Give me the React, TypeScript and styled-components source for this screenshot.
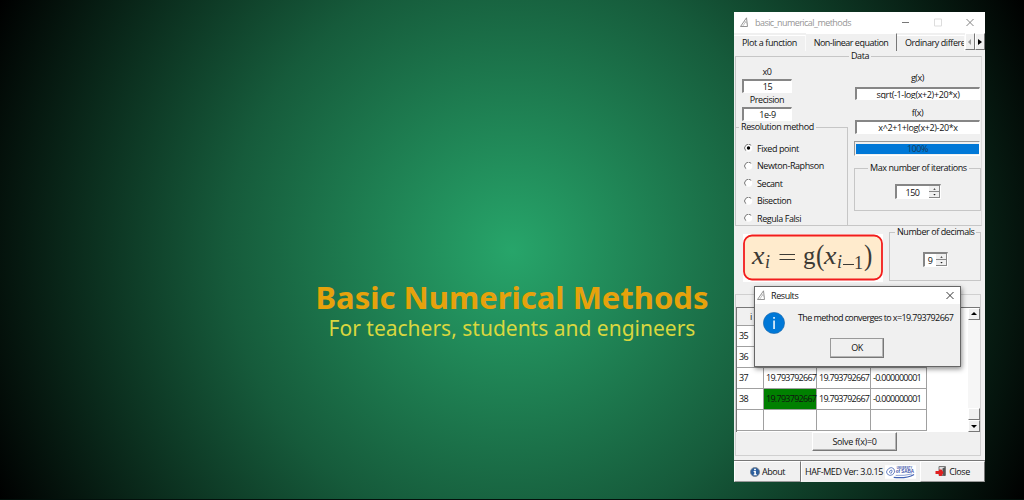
import React from 'react';
import styled, { createGlobalStyle, css } from 'styled-components';

const Global = createGlobalStyle`
  * { box-sizing: border-box; }
  body { margin: 0; background: #000; overflow: hidden; }
`;

const Page = styled.main`
  width: 1024px;
  height: 500px;
  display: flex;
  justify-content: flex-end;
  align-items: flex-start;
  padding: 12px 39px 0 0;
  border-bottom: 1px solid #02100b;
  background: radial-gradient(circle 570px at 512px 250px, #27a56a 0%, #165b3b 50%, #000 100%);
`;

const Hero = styled.header`
  width: 440px;
  padding-top: 264px;
  margin-right: 2px;
  text-align: center;
  font-family: 'Noto Sans', sans-serif;
  white-space: nowrap;
`;
const HeroTitle = styled.h1`
  margin: 0;
  font-size: 31px;
  line-height: 42px;
  font-weight: 700;
  color: #e6a20c;
`;
const HeroSub = styled.p`
  margin: -2px 0 0;
  font-size: 21px;
  line-height: 24px;
  color: #d9d73f;
`;

const Window = styled.section`
  position: relative;
  width: 251px;
  height: 470px;
  display: flex;
  flex-direction: column;
  background: #f0f0f0;
  color: #111;
  font: 9px/12px 'Open Sans', sans-serif;
  letter-spacing: -0.42px;
  white-space: nowrap;
  overflow: hidden;
`;

const Text = styled.span<{ $ls?: number; $pl?: number }>`
  padding-left: ${(p) => p.$pl ?? 0}px;
  letter-spacing: ${(p) => p.$ls ?? -0.42}px;
`;

const TitleBar = styled.div`
  flex: 0 0 21px;
  display: flex;
  align-items: center;
  gap: 6px;
  padding: 0 11px 0 6px;
  background: #fff;
  color: #969696;
  svg { flex: none; }
`;
const Grow = styled.span<{ $ls?: number }>`
  flex: 1;
  letter-spacing: ${(p) => p.$ls ?? 0}px;
`;
const TitleButtons = styled.span`
  display: flex;
  gap: 24px;
`;

const Tabs = styled.nav`
  flex: 0 0 22px;
  display: flex;
`;
const Tab = styled.div<{ $w: number; $active?: boolean }>`
  width: ${(p) => p.$w}px;
  height: ${(p) => (p.$active ? 18 : 16)}px;
  margin-top: ${(p) => (p.$active ? 0 : 2)}px;
  padding-top: ${(p) => (p.$active ? 3 : 1)}px;
  text-align: center;
  letter-spacing: ${(p) => (p.$active ? -0.5 : -0.4)}px;
  overflow: hidden;
  border-top: 1px solid #fff;
  border-right: 1px solid ${(p) => (p.$active ? '#777' : '#fafafa')};
`;
const TabArrow = styled.div<{ $w: number }>`
  width: ${(p) => p.$w}px;
  height: 17px;
  display: grid;
  place-items: center;
  border: 1px solid #fff;
  border-right-color: #777;
  border-bottom-color: #777;
`;

const Data = styled.div`
  flex: 0 0 169px;
  display: grid;
  grid-template-columns: 114px 1fr;
  position: relative;
  margin: 1px 3px 0 1px;
  border: 1px solid #c6c6c6;
  border-right-color: #dcdcdc;
`;
const Legend = styled.span<{ $left: number }>`
  position: absolute;
  top: -7px;
  left: ${(p) => p.$left}px;
  padding: 0 2px;
  background: #f0f0f0;
`;
const LeftCol = styled.div`
  display: flex;
  flex-direction: column;
  padding-top: 9px;
`;
const RightCol = styled.div`
  display: flex;
  flex-direction: column;
  padding: 15px 0 0 5px;
`;
const Caption = styled.div<{ $w: number; $h: number; $pt?: number }>`
  flex: none;
  width: ${(p) => p.$w}px;
  height: ${(p) => p.$h}px;
  padding-top: ${(p) => p.$pt ?? 0}px;
  text-align: center;
`;
const sunken = css`
  background: #fff;
  border: 1px solid #fff;
  border-top: 2px solid #868686;
  border-left: 2px solid #868686;
`;
const Field = styled.div<{ $w: number; $h: number; $ml?: number; $lh?: number; $ls?: number }>`
  ${sunken}
  flex: none;
  width: ${(p) => p.$w}px;
  height: ${(p) => p.$h}px;
  margin-left: ${(p) => p.$ml ?? 0}px;
  line-height: ${(p) => p.$lh ?? 11}px;
  letter-spacing: ${(p) => p.$ls ?? -0.42}px;
  text-align: center;
  overflow: hidden;
`;
const Methods = styled.div`
  position: relative;
  flex: none;
  width: 112px;
  height: 98px;
  margin-top: 6px;
  padding: 12px 0 0 8px;
  border-top: 1px solid #c6c6c6;
  border-right: 1px solid #c6c6c6;
`;
const Option = styled.div`
  height: 17.5px;
  display: flex;
  align-items: center;
  gap: 4px;
`;
const Progress = styled.div`
  flex: none;
  width: 126px;
  height: 15px;
  margin: 7px 0 0 -1px;
  border: 1px solid #fff;
  border-top-color: #999;
  border-left-color: #999;
  padding: 2px 0 2px 1px;
  div {
    height: 10px;
    line-height: 10px;
    text-align: center;
    background: #0078d7;
    color: #173c5e;
  }
`;
const Group = styled.div<{ $w: number; $h: number; $pt: number; $mt?: number; $ml?: number }>`
  flex: none;
  position: relative;
  width: ${(p) => p.$w}px;
  height: ${(p) => p.$h}px;
  margin-top: ${(p) => p.$mt ?? 0}px;
  margin-left: ${(p) => p.$ml ?? 0}px;
  padding-top: ${(p) => p.$pt}px;
  border: 1px solid #c6c6c6;
  display: flex;
  justify-content: center;
  align-items: flex-start;
`;
const Spin = styled.div<{ $w: number }>`
  ${sunken}
  width: ${(p) => p.$w}px;
  height: 15px;
  display: flex;
  line-height: 13px;
  span { flex: 1; text-align: center; }
`;

const FormulaRow = styled.div`
  flex: 0 0 56px;
  display: flex;
  justify-content: space-between;
  padding: 6px 4px 0 9px;
`;
const Formula = styled.div`
  width: 140px;
  height: 48px;
  margin-top: 2px;
  background: #fff;
`;

const Results = styled.div`
  position: relative;
  margin: 12px 4px 0 1px;
  height: 162px;
  padding-top: 12px;
  border: 1px solid #d0d0d0;
`;
const TableArea = styled.div`
  display: flex;
  height: 125px;
  background: #fff;
  border-left: 1px solid #777;
  border-top: 1px solid #777;
`;
const Table = styled.div`
  flex: 1;
`;
const Row = styled.div<{ $h: number; $head?: boolean }>`
  display: grid;
  grid-template-columns: 27px 53px 54px 56px;
  width: 190px;
  height: ${(p) => p.$h}px;
  background: ${(p) => (p.$head ? '#f0f0f0' : '#fff')};
`;
const Cell = styled.div<{ $hit?: boolean }>`
  display: flex;
  align-items: center;
  padding-left: 2px;
  letter-spacing: -0.73px;
  border-right: 1px solid #a0a0a0;
  border-bottom: 1px solid #a0a0a0;
  background: ${(p) => (p.$hit ? '#008000' : 'transparent')};
`;
const Scroll = styled.div`
  width: 12px;
  display: flex;
  flex-direction: column;
  background: #f6f6f6;
`;
const ScrollPart = styled.div<{ $push?: boolean }>`
  height: 12px;
  margin-top: ${(p) => (p.$push ? 'auto' : 0)};
  display: grid;
  place-items: center;
  background: #f0f0f0;
  border: 1px solid #fff;
  border-right-color: #777;
  border-bottom-color: #777;
`;
const Button = styled.div<{ $w: number; $h: number; $ml: number; $ring?: boolean }>`
  width: ${(p) => p.$w}px;
  height: ${(p) => p.$h}px;
  margin-left: ${(p) => p.$ml}px;
  display: grid;
  place-items: center;
  background: #f0f0f0;
  border: 1px solid ${(p) => (p.$ring ? '#999' : '#fff')};
  border-right-color: #777;
  border-bottom-color: #777;
  box-shadow: inset -1px -1px #b5b5b5;
`;
const Footer = styled.div`
  margin-top: auto;
  height: 22px;
  display: flex;
  border-top: 1px solid #777;
`;
const FootItem = styled.div<{ $w: number; $raised?: boolean; $pad?: number }>`
  width: ${(p) => p.$w}px;
  display: flex;
  align-items: center;
  justify-content: ${(p) => (p.$pad ? 'space-between' : 'center')};
  padding: 0 ${(p) => p.$pad ?? 0}px;
  gap: 2px;
  border-top: 1px solid #fff;
  border-bottom: 1px solid ${(p) => (p.$raised ? '#999' : '#f0f0f0')};
  border-right: 1px solid ${(p) => (p.$raised ? '#777' : '#f0f0f0')};
  border-left: 1px solid #fff;
`;

const Dialog = styled.div`
  position: absolute;
  left: 20px;
  top: 274px;
  width: 207px;
  height: 81px;
  display: flex;
  flex-direction: column;
  background: #f0f0f0;
  border: 1px solid #666;
  box-shadow: 1px 2px 5px rgba(0, 0, 0, 0.45);
`;
const DialogTitle = styled.div`
  flex: none;
  height: 17px;
  display: flex;
  align-items: center;
  gap: 5px;
  padding: 0 6px 0 2px;
  background: #fff;
`;
const DialogBody = styled.div`
  display: flex;
  height: 34px;
  padding: 8px 0 0 8px;
  gap: 13px;
`;

const AppIcon = () => (
  <svg width="9" height="11" viewBox="0 0 9 11" fill="none" stroke="#888" strokeWidth="0.9">
    <path d="M0.500 9.500L6.500 0.800L7.500 9.500Z" />
    <path d="M2.500 9.500L5.800 4.500M4.500 4L7 6.500" strokeWidth="0.5" />
  </svg>
);
const Cross = ({ color }: { color: string }) => (
  <svg width="8" height="9" viewBox="0 0 8 9" stroke={color} strokeWidth="0.9">
    <path d="M.5 1L7.5 8M7.5 1L.5 8" />
  </svg>
);
const Arrow = ({ d, color = '#000' }: { d: string; color?: string }) => (
  <svg width="6" height="6" viewBox="0 0 6 6" fill={color}>
    <path d={d} />
  </svg>
);
const Radio = ({ on }: { on?: boolean }) => (
  <svg width="9" height="9" viewBox="0 0 9 9">
    <circle cx="4.5" cy="4" r="3.8" fill="#fff" />
    <path d="M1.8 6.7A3.8 3.8 0 0 1 7.2 1.3" fill="none" stroke="#777" />
    {on && <circle cx="4.5" cy="4" r="1.7" fill="#000" />}
  </svg>
);
const SpinArrows = () => (
  <svg width="11" height="12" viewBox="0 0 11 12">
    <path d="M0 0H11V12H0Z" fill="#f0f0f0" />
    <path d="M0 5.5H11M0 11.5H11M10.5 0V12" stroke="#888" />
    <path d="M4.300 3.800L5.500 2.300L6.700 3.800ZM4.300 8L5.500 9.500L6.700 8Z" fill="#222" />
  </svg>
);
const InfoIcon = ({ size, rim }: { size: number; rim?: boolean }) => (
  <svg width={size} height={size} viewBox="0 0 22 22">
    <circle cx="11" cy="11" r={rim ? 10 : 10.6} fill={rim ? '#2c5f9e' : '#0078d7'} stroke={rim ? '#7d8793' : '#1c66a8'} strokeWidth={rim ? 2 : 0.6} />
    <path d={rim ? 'M9 4H13V7H9ZM8 9H13V16H15V18H8V16H9.5V11H8Z' : 'M10.3 5H11.8V6.8H10.3ZM10.3 8.5H11.8V17H10.3Z'} fill="#fff" />
  </svg>
);
const FormulaArt = () => (
  <svg width="140" height="48" viewBox="0 0 140 48">
    <rect x="1" y="1.500" width="138" height="44" rx="8" fill="#ffebcd" stroke="#f21c1c" strokeWidth="1.8" />
    <g fill="#3c3a35" fontFamily="'Liberation Serif', serif" fontSize="25">
      <text x="9" y="30" fontStyle="italic" textLength="12" lengthAdjust="spacingAndGlyphs">x</text>
      <text x="22" y="34" fontStyle="italic" fontSize="18">i</text>
      <text x="60" y="30" textLength="12" lengthAdjust="spacingAndGlyphs">g</text>
      <text x="73" y="31" fontSize="30" textLength="8" lengthAdjust="spacingAndGlyphs">(</text>
      <text x="81" y="30" fontStyle="italic" textLength="12" lengthAdjust="spacingAndGlyphs">x</text>
      <text x="94" y="34" fontStyle="italic" fontSize="18">i</text>
      <text x="111" y="35" fontSize="18">1</text>
      <text x="121" y="31" fontSize="30" textLength="8" lengthAdjust="spacingAndGlyphs">)</text>
    </g>
    <path d="M36.500 20.500H52M36.500 25.500H52M100 30.500H111" stroke="#3c3a35" />
  </svg>
);
const UniLogo = () => (
  <svg width="32" height="14" viewBox="0 0 32 14" fill="none" stroke="#4262b4">
    <path d="M0 0H32V14H0Z" fill="#fff" stroke="none" />
    <path d="M1.500 7Q3 2.500 7 2.500Q10 3 10 7Q8 11 5 10.500Q2 10 1.500 7ZM4.500 7Q5 5 7 5Q8 7 6 8.500Z" strokeWidth="0.8" />
    <path d="M9 12.500Q22 14 30 9.500" strokeWidth="1.200" />
    <path d="M11 10.500Q20 11 28 9" strokeWidth="0.600" />
    <g fill="#3a4fa8" stroke="none" fontFamily="'Liberation Sans', sans-serif" fontWeight="700" letterSpacing="0">
      <text x="12" y="3.500" fontSize="3" textLength="16" lengthAdjust="spacingAndGlyphs">UNIVERSITY</text>
      <text x="11" y="8.500" fontSize="5" textLength="19" lengthAdjust="spacingAndGlyphs">of SABA</text>
    </g>
  </svg>
);
const ExitIcon = () => (
  <svg width="12" height="11" viewBox="0 0 12 11">
    <path d="M4 .5H10.500V9.500H4Z" fill="#ddd" stroke="#777" />
    <path d="M7.500 2.500L10 1V10L7.500 9Z" fill="#555" />
    <path d="M4 3.500H6.500L8.500 6.500L6.500 10H4V8H0.500V5H4Z" fill="#e02020" />
  </svg>
);

const METHODS = ['Fixed point', 'Newton-Raphson', 'Secant', 'Bisection', 'Regula Falsi'];
const X = '19.793792667';
const E = '-0.000000001';
const ROWS = [
  ['35', '', '', ''],
  ['36', '', '', ''],
  ['37', X, X, E],
  ['38', X, X, E],
  ['', '', '', ''],
];

export default function App() {
  return (
    <>
      <Global />
      <Page>
        <Hero>
          <HeroTitle>Basic Numerical Methods</HeroTitle>
          <HeroSub>For teachers, students and engineers</HeroSub>
        </Hero>
        <Window>
          <TitleBar>
            <AppIcon />
            <Grow $ls={-0.55}>basic_numerical_methods</Grow>
            <TitleButtons>
              <svg width="8" height="9"><path d="M0 4.500H7" stroke="#777" /></svg>
              <svg width="8" height="9"><path d="M.5 1H7.500V8H.5Z" fill="none" stroke="#ddd" /></svg>
              <Cross color="#777" />
            </TitleButtons>
          </TitleBar>
          <Tabs>
            <Tab $w={72}>Plot a function</Tab>
            <Tab $w={91} $active>Non-linear equation</Tab>
            <Tab $w={68}><Text $pl={8}>Ordinary differe</Text></Tab>
            <TabArrow $w={10}><Arrow d="M4 0V6L1 3Z" color="#999" /></TabArrow>
            <TabArrow $w={10}><Arrow d="M1 0V6L5 3Z" /></TabArrow>
          </Tabs>
          <Data>
            <Legend $left={113}>Data</Legend>
            <LeftCol>
              <Caption $w={62} $h={13}>x0</Caption>
              <Field $w={50} $h={14} $ml={6}>15</Field>
              <Caption $w={62} $h={14} $pt={1}>Precision</Caption>
              <Field $w={50} $h={14} $ml={6}>1e-9</Field>
              <Methods>
                <Legend $left={3}>Resolution method</Legend>
                {METHODS.map((m, i) => (
                  <Option key={m}><Radio on={i === 0} />{m}</Option>
                ))}
              </Methods>
            </LeftCol>
            <RightCol>
              <Caption $w={125} $h={15}>g(x)</Caption>
              <Field $w={125} $h={13} $lh={11} $ls={-0.36}>sqrt(-1-log(x+2)+20*x)</Field>
              <Caption $w={125} $h={20} $pt={7}>f(x)</Caption>
              <Field $w={125} $h={14} $lh={11} $ls={-0.36}>x^2+1+log(x+2)-20*x</Field>
              <Progress><div>100%</div></Progress>
              <Group $w={127} $h={43} $pt={15} $mt={12} $ml={-1}>
                <Legend $left={13}>Max number of iterations</Legend>
                <Spin $w={46}><span>150</span><SpinArrows /></Spin>
              </Group>
            </RightCol>
          </Data>
          <FormulaRow>
            <Formula><FormulaArt /></Formula>
            <Group $w={92} $h={49} $pt={19}>
              <Legend $left={5}>Number of decimals</Legend>
              <Spin $w={25}><span>9</span><SpinArrows /></Spin>
            </Group>
          </FormulaRow>
          <Results>
            <TableArea>
              <Table>
                <Row $h={18} $head><Cell><Text $pl={11}>i</Text></Cell><Cell /><Cell /><Cell /></Row>
                {ROWS.map((r, i) => (
                  <Row key={i} $h={21}>
                    {r.map((v, j) => <Cell key={j} $hit={r[0] === '38' && j === 1}>{v}</Cell>)}
                  </Row>
                ))}
              </Table>
              <Scroll>
                <ScrollPart><Arrow d="M0 4H6L3 1Z" /></ScrollPart>
                <ScrollPart $push />
                <ScrollPart><Arrow d="M0 2H6L3 5Z" /></ScrollPart>
              </Scroll>
            </TableArea>
            <Button $w={85} $h={19} $ml={76}><Text $ls={-0.3}>Solve f(x)=0</Text></Button>
          </Results>
          <Footer>
            <FootItem $w={67} $raised><InfoIcon size={10} rim /> About</FootItem>
            <FootItem $w={119} $pad={3}>HAF-MED Ver: 3.0.15<UniLogo /></FootItem>
            <FootItem $w={65} $raised><ExitIcon />Close</FootItem>
          </Footer>
          <Dialog>
            <DialogTitle><AppIcon /><Grow $ls={-0.42}>Results</Grow><Cross color="#222" /></DialogTitle>
            <DialogBody><InfoIcon size={22} /><Text $ls={-0.6}>The method converges to x=19.793792667</Text></DialogBody>
            <Button $w={54} $h={20} $ml={75} $ring>OK</Button>
          </Dialog>
        </Window>
      </Page>
    </>
  );
}
